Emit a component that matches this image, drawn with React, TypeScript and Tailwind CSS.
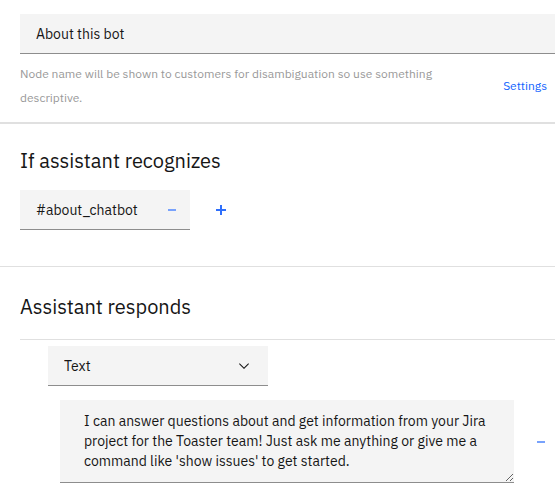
import { useState } from "react";

interface IconProps {
  className?: string;
}

function MinusIcon({ className }: IconProps) {
  return (
    <svg viewBox="0 0 16 16" className={className} aria-hidden="true">
      <path d="M4 7h8v2H4z" fill="currentColor" />
    </svg>
  );
}

function PlusIcon({ className }: IconProps) {
  return (
    <svg viewBox="0 0 16 16" className={className} aria-hidden="true">
      <path d="M7 3h2v4h4v2H9v4H7V9H3V7h4z" fill="currentColor" />
    </svg>
  );
}

function ChevronIcon({ className }: IconProps) {
  return (
    <svg viewBox="0 0 16 16" className={className} aria-hidden="true">
      <path d="M8 11L3 6l.7-.7L8 9.6l4.3-4.3.7.7z" fill="currentColor" />
    </svg>
  );
}

export default function App() {
  const [name, setName] = useState("About this bot");
  const [conditions, setConditions] = useState(["#about_chatbot"]);
  const [responseType, setResponseType] = useState("Text");
  const [response, setResponse] = useState(
    "I can answer questions about and get information from your Jira project for the Toaster team! Just ask me anything or give me a command like 'show issues' to get started.",
  );

  const updateCondition = (index: number, value: string) => {
    setConditions((prev) => prev.map((c, i) => (i === index ? value : c)));
  };

  return (
    <main className="min-h-screen overflow-hidden bg-white pt-[14px] font-['IBM_Plex_Sans',Roboto,sans-serif] text-sm text-[#161616]">
      {/* Node name */}
      <header className="border-b-2 border-[#e0e0e0] pb-3 pl-5">
        <input
          aria-label="Node name"
          value={name}
          onChange={(e) => setName(e.target.value)}
          className="block h-10 w-full border-b border-[#8d8d8d] bg-[#f4f4f4] px-4 outline-none"
        />
        <div className="mt-2 flex items-center justify-between gap-4 pr-2">
          <p className="max-w-[440px] text-xs leading-6 text-[#999999]">
            Node name will be shown to customers for disambiguation so use
            something descriptive.
          </p>
          <a href="#settings" className="text-xs text-[#0f62fe]">
            Settings
          </a>
        </div>
      </header>

      {/* Conditions */}
      <section className="border-b border-[#e0e0e0] px-5 pt-[23px] pb-9">
        <h2 className="text-xl leading-7">If assistant recognizes</h2>
        <div className="mt-[15px] flex items-center gap-[23px]">
          {conditions.map((condition, i) => (
            <div
              key={i}
              className="flex h-10 w-[170px] items-center border-b border-[#8d8d8d] bg-[#f4f4f4] pr-[10px]"
            >
              <input
                aria-label="Condition"
                value={condition}
                onChange={(e) => updateCondition(i, e.target.value)}
                className="w-full min-w-0 flex-1 pl-4 outline-none"
              />
              <button
                aria-label="Remove condition"
                onClick={() =>
                  setConditions((prev) => prev.filter((_, j) => j !== i))
                }
                className="text-[#78a2fc]"
              >
                <MinusIcon className="size-4" />
              </button>
            </div>
          ))}
          <button
            aria-label="Add condition"
            onClick={() => setConditions((prev) => [...prev, ""])}
            className="text-[#2f6ffb]"
          >
            <PlusIcon className="size-4" />
          </button>
        </div>
      </section>

      {/* Responses */}
      <section className="pt-[26px] pl-5">
        <h2 className="border-b border-[#e0e0e0] pb-[18px] text-xl leading-7">
          Assistant responds
        </h2>
        <div className="relative mt-[6px] ml-7 w-[220px]">
          <select
            aria-label="Response type"
            value={responseType}
            onChange={(e) => setResponseType(e.target.value)}
            className="block h-10 w-full appearance-none border-b border-[#8d8d8d] bg-[#f4f4f4] px-4 outline-none"
          >
            <option>Text</option>
            <option>Image</option>
            <option>Option</option>
            <option>Pause</option>
          </select>
          <ChevronIcon className="pointer-events-none absolute top-3 right-4 size-4" />
        </div>
        <div className="mt-[14px] ml-10 flex items-center gap-[19px] pr-[6px]">
          <textarea
            aria-label="Response text"
            rows={3}
            value={response}
            onChange={(e) => setResponse(e.target.value)}
            className="block h-[83px] min-w-0 flex-1 resize-y border-b border-[#8d8d8d] bg-[#f4f4f4] py-[11px] pr-4 pl-6 leading-5 outline-none"
          />
          <button aria-label="Remove response" className="text-[#78a2fc]">
            <MinusIcon className="size-4" />
          </button>
        </div>
      </section>
    </main>
  );
}
